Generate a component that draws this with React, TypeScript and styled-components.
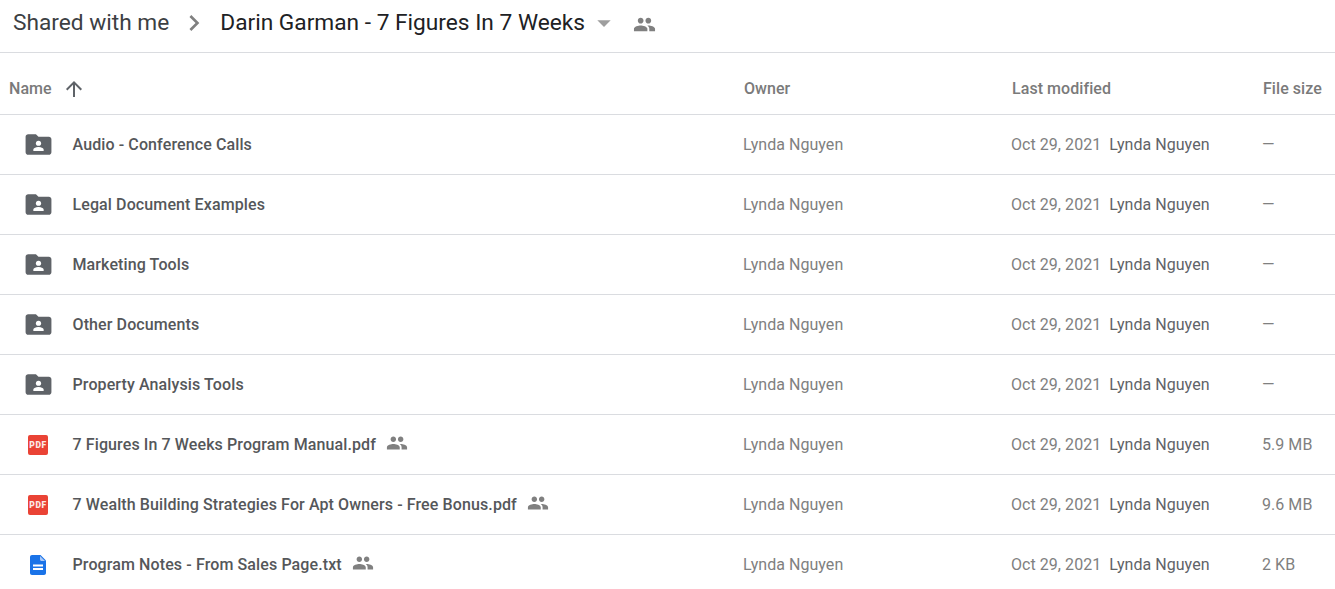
import React from "react";
import styled, { createGlobalStyle } from "styled-components";

const Global = createGlobalStyle`
  html, body { margin: 0; padding: 0; background: #fff; overflow: hidden; }
  body { font-family: Roboto, "Liberation Sans", sans-serif; }
`;

const Page = styled.div`
  width: 1335px;
  height: 589px;
  overflow: hidden;
`;

const Breadcrumb = styled.header`
  display: flex;
  align-items: center;
  padding: 0 0 7px 13px;
  box-sizing: border-box;
  height: 53px;
  border-bottom: 1px solid #dadce0;
  font-size: 22.7px;
`;

const Crumb = styled.span<{ $current?: boolean }>`
  color: ${(p) => (p.$current ? "#202124" : "#3c4043")};
  white-space: nowrap;
`;

const Sep = styled.svg`
  width: 32px;
  height: 32px;
  margin: 0 10px 0 9px;
  fill: #808080;
`;

const Caret = styled.svg`
  width: 32px;
  height: 32px;
  margin-left: 3px;
  fill: #9e9e9e;
`;

const TitleShare = styled.svg`
  width: 23px;
  height: 23px;
  margin: 4px 0 0 13px;
  fill: #808080;
`;

const columns = "743px 268px 251px 1fr";

const HeaderRow = styled.div`
  display: grid;
  grid-template-columns: ${columns};
  height: 51px;
  padding-top: 10px;
  align-items: center;
  border-bottom: 1px solid #dadce0;
  font-size: 16px;
  font-weight: 500;
  letter-spacing: 0.06px;
  color: #7a7a7a;
`;

const NameHead = styled.div`
  display: flex;
  align-items: center;
  padding-left: 9px;
`;

const HeadCell = styled.div`
  padding-left: 1px;
  white-space: nowrap;
`;

const SortIcon = styled.svg`
  width: 24px;
  height: 24px;
  margin-left: 10px;
  fill: #5f6368;
`;

const Row = styled.div`
  display: grid;
  grid-template-columns: ${columns};
  height: 59px;
  align-items: center;
  border-bottom: 1px solid #dadce0;
  font-size: 16px;
  letter-spacing: 0.05px;
  color: #808080;

  &:last-child {
    border-bottom: none;
  }
`;

const NameCell = styled.div`
  display: flex;
  align-items: center;
`;

const IconSlot = styled.div`
  width: 24px;
  height: 24px;
  margin-left: 26px;
  margin-right: 22.5px;
  display: flex;
  align-items: center;
  justify-content: center;
`;

const FileName = styled.span`
  font-weight: 500;
  letter-spacing: 0.11px;
  color: #55575a;
  white-space: nowrap;
`;

const SharedIcon = styled.svg`
  width: 22px;
  height: 22px;
  margin: 0 0 4px 10px;
  fill: #808080;
`;

const Cell = styled.div`
  white-space: nowrap;
`;

const ModifiedBy = styled.span`
  color: #5f6368;
  margin-left: 8px;
`;

const Svg = styled.svg`
  flex: none;
`;

const PeoplePath = () => (
  <path d="M16 11c1.66 0 2.99-1.34 2.99-3S17.66 5 16 5s-3 1.34-3 3 1.34 3 3 3zm-8 0c1.66 0 2.99-1.34 2.99-3S9.66 5 8 5 5 6.34 5 8s1.34 3 3 3zm0 2c-2.33 0-7 1.17-7 3.5V19h14v-2.5C15 14.17 10.33 13 8 13zm8 0c-.29 0-.62.02-.97.05 1.16.84 1.97 1.97 1.97 3.45V19h6v-2.5c0-2.33-4.67-3.5-7-3.5z" />
);

const FolderIcon = () => (
  <Svg width="31" height="31" viewBox="0 0 24 24">
    <path fill="#5f6368" d="M10 4H4c-1.1 0-2 .9-2 2v12c0 1.1.9 2 2 2h16c1.1 0 2-.9 2-2V8c0-1.1-.9-2-2-2h-8l-2-2z" />
    <circle cx="12" cy="11" r="2" fill="#fff" />
    <path fill="#fff" d="M8 17v-1c0-1.33 2.67-2 4-2s4 .67 4 2v1H8z" />
  </Svg>
);

const PdfIcon = () => (
  <Svg width="20" height="20" viewBox="0 0 20 20">
    <rect width="20" height="20" rx="2" fill="#ea4335" />
    <text x="10" y="13.2" textAnchor="middle" fontFamily="Roboto, sans-serif" fontWeight="900" fontSize="8.5" letterSpacing="0.6" fill="#fff" opacity="0.88">PDF</text>
  </Svg>
);

const DocIcon = () => (
  <Svg width="16" height="20" viewBox="0 0 16 20">
    <path fill="#1a73e8" d="M2 0h8.5L16 5.5V18c0 1.1-.9 2-2 2H2c-1.1 0-2-.9-2-2V2C0 .9.9 0 2 0z" />
    <path fill="#a9c8f7" d="M10 1l5 5h-3.5C10.7 6 10 5.3 10 4.5V1z" />
    <rect x="3" y="9.5" width="10" height="2" fill="#fff" />
    <rect x="3" y="13" width="10" height="2" fill="#fff" />
  </Svg>
);

type Item = { name: string; kind: "folder" | "pdf" | "doc"; size: string; shared?: boolean };

const items: Item[] = [
  { name: "Audio - Conference Calls", kind: "folder", size: "—" },
  { name: "Legal Document Examples", kind: "folder", size: "—" },
  { name: "Marketing Tools", kind: "folder", size: "—" },
  { name: "Other Documents", kind: "folder", size: "—" },
  { name: "Property Analysis Tools", kind: "folder", size: "—" },
  { name: "7 Figures In 7 Weeks Program Manual.pdf", kind: "pdf", size: "5.9 MB", shared: true },
  { name: "7 Wealth Building Strategies For Apt Owners - Free Bonus.pdf", kind: "pdf", size: "9.6 MB", shared: true },
  { name: "Program Notes - From Sales Page.txt", kind: "doc", size: "2 KB", shared: true },
];

const kindIcon = { folder: <FolderIcon />, pdf: <PdfIcon />, doc: <DocIcon /> };

export default function App() {
  return (
    <Page>
      <Global />
      <Breadcrumb>
        <Crumb>Shared with me</Crumb>
        <Sep viewBox="0 0 24 24"><path d="M8.59 16.59 13.17 12 8.59 7.41 10 6l6 6-6 6z" /></Sep>
        <Crumb $current>Darin Garman - 7 Figures In 7 Weeks</Crumb>
        <Caret viewBox="0 0 24 24"><path d="M7 10l5 5 5-5z" /></Caret>
        <TitleShare viewBox="0 0 24 24"><PeoplePath /></TitleShare>
      </Breadcrumb>
      <HeaderRow>
        <NameHead>
          Name
          <SortIcon viewBox="0 0 24 24"><path d="M4 12l1.41 1.41L11 7.83V20h2V7.83l5.58 5.59L20 12l-8-8-8 8z" /></SortIcon>
        </NameHead>
        <HeadCell>Owner</HeadCell>
        <HeadCell>Last modified</HeadCell>
        <HeadCell>File size</HeadCell>
      </HeaderRow>
      {items.map((it) => (
        <Row key={it.name}>
          <NameCell>
            <IconSlot>{kindIcon[it.kind]}</IconSlot>
            <FileName>{it.name}</FileName>
            {it.shared && (
              <SharedIcon viewBox="0 0 24 24"><PeoplePath /></SharedIcon>
            )}
          </NameCell>
          <Cell>Lynda Nguyen</Cell>
          <Cell>
            Oct 29, 2021<ModifiedBy>Lynda Nguyen</ModifiedBy>
          </Cell>
          <Cell>{it.size}</Cell>
        </Row>
      ))}
    </Page>
  );
}
